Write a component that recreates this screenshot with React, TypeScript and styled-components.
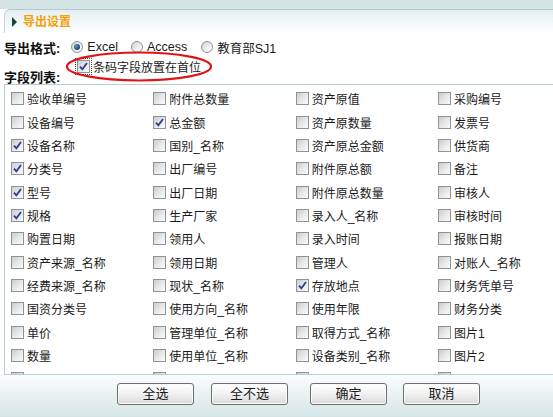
import React from "react";
import styled, { createGlobalStyle } from "styled-components";

const GlobalStyle = createGlobalStyle`
  html, body { margin: 0; padding: 0; }
  body {
    font-family: "Liberation Sans", "Noto Sans CJK SC", sans-serif;
    color: #1a1a1a;
    background: #fff;
  }
`;

const Page = styled.div`
  width: 553px;
  height: 417px;
  overflow: hidden;
  display: flex;
  flex-direction: column;
  background: linear-gradient(to bottom, #d4e4e4 0, #d4e4e4 9px, #fff 9px);
`;

const Header = styled.div`
  margin: 9px 0 0 4px;
  height: 23px;
  border-top: 1px solid #b3cbcb;
  border-left: 1px solid #c4d8d8;
  border-top-left-radius: 6px;
  background: linear-gradient(to bottom, #e3efef, #ffffff);
  display: flex;
  align-items: center;
  padding-left: 7px;
  gap: 6px;
`;

const Arrow = styled.span`
  width: 0;
  height: 0;
  border-top: 5px solid transparent;
  border-bottom: 5px solid transparent;
  border-left: 5px solid #17473a;
`;

const Title = styled.span`
  font-size: 12px;
  font-weight: bold;
  color: #f2a007;
  line-height: 14px;
`;

const Body = styled.div`
  position: relative;
  padding-left: 4px;
  display: flex;
  flex-direction: column;
`;

const FormatRow = styled.div`
  margin-top: 3px;
  height: 22px;
  display: flex;
  align-items: center;
`;

const BoldLabel = styled.span`
  font-size: 13px;
  font-weight: bold;
  color: #111;
  white-space: nowrap;
`;

const RadioOption = styled.label<{ $gap: number }>`
  display: flex;
  align-items: center;
  gap: 4px;
  margin-left: ${(p) => p.$gap}px;
  font-size: 12.5px;
  color: #1a1a1a;
  white-space: nowrap;
`;

const RadioCircle = styled.span<{ $on?: boolean }>`
  box-sizing: border-box;
  width: 12px;
  height: 12px;
  border-radius: 50%;
  border: 1px solid #8e9499;
  background: linear-gradient(135deg, #cfd2d4, #f7f7f7 75%);
  display: flex;
  align-items: center;
  justify-content: center;
  &::after {
    content: "";
    display: ${(p) => (p.$on ? "block" : "none")};
    width: 6px;
    height: 6px;
    border-radius: 50%;
    background: radial-gradient(circle at 35% 35%, #6d8fbf, #1f3f72 70%);
  }
`;

const BarcodeRow = styled.div`
  height: 16px;
  display: flex;
  align-items: center;
  padding-left: 73px;
  gap: 3px;
  font-size: 12px;
`;

const FocusWrap = styled.span`
  display: flex;
  outline: 1px dotted #444;
  outline-offset: 1px;
`;

const Ellipse = styled.svg`
  position: absolute;
  left: 65px;
  top: 18px;
  width: 148px;
  height: 31px;
  pointer-events: none;
`;

const ListLabel = styled(BoldLabel)`
  display: block;
  height: 10px;
  line-height: 7px;
`;

const FieldBox = styled.div`
  box-sizing: border-box;
  width: 575px;
  height: 291px;
  border: 1px solid #b6d0d0;
  overflow: hidden;
  padding: 2px 0 0 6px;
  display: grid;
  grid-template-columns: repeat(4, 142.33px);
  grid-auto-rows: 23.35px;
`;

const Field = styled.label`
  display: flex;
  align-items: center;
  gap: 3px;
  font-size: 12px;
  color: #1a1a1a;
  white-space: nowrap;
`;

const Box = styled.span`
  box-sizing: border-box;
  flex: none;
  width: 13px;
  height: 13px;
  border: 1px solid #8f9396;
  background: linear-gradient(135deg, #c9cbcd 0%, #e6e7e8 50%, #fbfbfb 100%);
  display: flex;
  align-items: center;
  justify-content: center;
`;

const Footer = styled.div`
  flex: 1;
  display: flex;
  align-items: flex-start;
  padding: 8px 0 0 117px;
  gap: 22px;
  background: linear-gradient(to bottom, #fbfdfd, #d5e5e5);
`;

const ButtonGroup = styled.div<{ $gap: number }>`
  display: flex;
  gap: ${(p) => p.$gap}px;
`;

const Button = styled.button`
  box-sizing: border-box;
  width: 77px;
  height: 22px;
  border: 1px solid #6f6f6f;
  border-radius: 3px;
  background: linear-gradient(to bottom, #ffffff 0%, #f3f3f3 45%, #dadada 100%);
  box-shadow: inset 0 0 0 1px #fafafa;
  font-family: "Liberation Sans", "Noto Sans CJK SC", sans-serif;
  font-size: 13px;
  color: #1a1a1a;
  padding: 0;
  line-height: 18px;
`;

const Check = () => (
  <svg width="9" height="9" viewBox="0 0 9 9">
    <path d="M1 4.6 L3.4 7.4 L8 1" fill="none" stroke="#2c3f8f" strokeWidth="1.8" />
  </svg>
);

const CheckBox: React.FC<{ on?: boolean }> = ({ on }) => <Box>{on ? <Check /> : null}</Box>;

const fields: [string, boolean][] = [
  ["验收单编号", false], ["附件总数量", false], ["资产原值", false], ["采购编号", false],
  ["设备编号", false], ["总金额", true], ["资产原数量", false], ["发票号", false],
  ["设备名称", true], ["国别_名称", false], ["资产原总金额", false], ["供货商", false],
  ["分类号", true], ["出厂编号", false], ["附件原总额", false], ["备注", false],
  ["型号", true], ["出厂日期", false], ["附件原总数量", false], ["审核人", false],
  ["规格", true], ["生产厂家", false], ["录入人_名称", false], ["审核时间", false],
  ["购置日期", false], ["领用人", false], ["录入时间", false], ["报账日期", false],
  ["资产来源_名称", false], ["领用日期", false], ["管理人", false], ["对账人_名称", false],
  ["经费来源_名称", false], ["现状_名称", false], ["存放地点", true], ["财务凭单号", false],
  ["国资分类号", false], ["使用方向_名称", false], ["使用年限", false], ["财务分类", false],
  ["单价", false], ["管理单位_名称", false], ["取得方式_名称", false], ["图片1", false],
  ["数量", false], ["使用单位_名称", false], ["设备类别_名称", false], ["图片2", false],
  ["", false], ["", false], ["", false], ["", false],
];

export default function App() {
  return (
    <>
      <GlobalStyle />
      <Page>
        <Header>
          <Arrow />
          <Title>导出设置</Title>
        </Header>
        <Body>
          <FormatRow>
            <BoldLabel>导出格式:</BoldLabel>
            <RadioOption $gap={11}>
              <RadioCircle $on />
              Excel
            </RadioOption>
            <RadioOption $gap={13}>
              <RadioCircle />
              Access
            </RadioOption>
            <RadioOption $gap={14}>
              <RadioCircle />
              教育部SJ1
            </RadioOption>
          </FormatRow>
          <BarcodeRow>
            <FocusWrap>
              <CheckBox on />
            </FocusWrap>
            <span>条码字段放置在首位</span>
          </BarcodeRow>
          <Ellipse viewBox="0 0 148 31">
            <ellipse cx="74" cy="15.5" rx="72" ry="14" fill="none" stroke="#e01414" strokeWidth="2.2" />
          </Ellipse>
          <ListLabel>字段列表:</ListLabel>
          <FieldBox>
            {fields.map(([name, on], i) => (
              <Field key={i}>
                <CheckBox on={on} />
                {name}
              </Field>
            ))}
          </FieldBox>
        </Body>
        <Footer>
          <ButtonGroup $gap={17}>
            <Button>全选</Button>
            <Button>全不选</Button>
          </ButtonGroup>
          <ButtonGroup $gap={16}>
            <Button>确定</Button>
            <Button>取消</Button>
          </ButtonGroup>
        </Footer>
      </Page>
    </>
  );
}
